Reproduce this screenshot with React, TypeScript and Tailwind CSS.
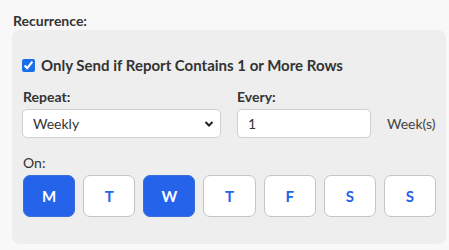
import React from "react";

const days = [
  { l: "M", on: true },
  { l: "T", on: false },
  { l: "W", on: true },
  { l: "T", on: false },
  { l: "F", on: false },
  { l: "S", on: false },
  { l: "S", on: false },
];

export default function App() {
  return (
    <div
      className="w-[449px] h-[250px] bg-[#f8f8f8] text-[#333] pl-[12px] pr-[3px] pt-[12px]"
      style={{ fontFamily: "Lato, 'Liberation Sans', sans-serif" }}
    >
      <div className="text-[14px] font-bold leading-[18px] ml-[1px]">Recurrence:</div>
      <div className="h-[214px] rounded-[8px] bg-[#eeeeee] px-[10px] pt-[25px]">
        <label className="flex items-center gap-[6px]">
          <input type="checkbox" defaultChecked className="w-[13px] h-[13px] m-0 accent-[#1a6fe8]" />
          <span className="text-[15px] font-bold leading-[20px]">
            Only Send if Report Contains 1 or More Rows
          </span>
        </label>
        <div className="mt-[13px] flex items-end">
          <div className="w-[199px]">
            <div className="text-[14px] font-bold leading-[17px] ml-[1px] mb-[4px]">Repeat:</div>
            <div className="relative h-[29px] rounded-[5px] border border-[#cfcfd4] bg-white flex items-center pl-[10px] text-[14px]">
              Weekly
              <svg className="absolute right-[6px] top-[10px]" width="10" height="8" viewBox="0 0 10 8">
                <path d="M1.5 2 L5 5.5 L8.5 2" fill="none" stroke="#222" strokeWidth="2" />
              </svg>
            </div>
          </div>
          <div className="ml-[16px] w-[134px]">
            <div className="text-[14px] font-bold leading-[17px] mb-[4px]">Every:</div>
            <div className="h-[29px] rounded-[5px] border border-[#cfcfd4] bg-white flex items-center pl-[10px] text-[14px]">
              1
            </div>
          </div>
          <div className="ml-[16px] h-[29px] flex items-center text-[14px] text-[#444]">Week(s)</div>
        </div>
        <div className="mt-[18px] text-[14px] leading-[14px] ml-[1px]">On:</div>
        <div className="mt-[5px] flex gap-[8px] pl-[1px]">
          {days.map((d, i) => (
            <div
              key={i}
              className={
                d.on
                  ? "flex-1 h-[42px] rounded-[7px] border border-[#3a6fd8] bg-[#2563eb] text-white flex items-center justify-center text-[15px] font-bold"
                  : "flex-1 h-[42px] rounded-[7px] border border-[#c3c3cc] bg-white text-[#2563eb] flex items-center justify-center text-[15px] font-bold"
              }
            >
              {d.l}
            </div>
          ))}
        </div>
      </div>
    </div>
  );
}
